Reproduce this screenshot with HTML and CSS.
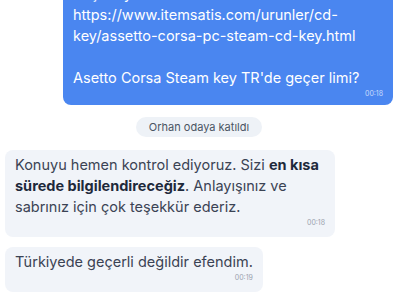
FILE: index.html
```html
<!DOCTYPE html>
<html>
<head>
    <meta charset="utf-8" />
    <title>Sohbet</title>
    <link rel="stylesheet" href="styles.css">
</head>
<body>
    <div class="chat">
        <div class="msg msg-out">
            <p class="msg-text">Merhaba, bu ürünü sitenizden satın almayı düşünüyorum:<br>https://www.itemsatis.com/urunler/cd-key/assetto-corsa-pc-steam-cd-key.html<br><br>Asetto Corsa Steam key TR'de geçer limi?</p>
            <span class="msg-time">00:18</span>
        </div>
        <div class="notice">Orhan odaya katıldı</div>
        <div class="msg msg-in">
            <p class="msg-text">Konuyu hemen kontrol ediyoruz. Sizi <b>en kısa</b> <b>sürede bilgilendireceğiz</b>. Anlayışınız ve sabrınız için çok teşekkür ederiz.</p>
            <span class="msg-time">00:18</span>
        </div>
        <div class="msg msg-in">
            <p class="msg-text">Türkiyede geçerli değildir efendim.</p>
            <span class="msg-time">00:19</span>
        </div>
    </div>
</body>
</html>
```
FILE: styles.css
```css
body {
    margin: 0;
    background: #fff;
    font-family: Inter, "Noto Sans", sans-serif;
}
.chat {
    height: 306px;
    box-sizing: border-box;
    padding: 0 6px 14px 5px;
    display: flex;
    flex-direction: column;
    justify-content: flex-end;
    overflow: hidden;
}
.msg {
    max-width: 330px;
    box-sizing: border-box;
    padding: 4px 10px 8px 10px;
    border-radius: 8px;
    flex-shrink: 0;
}
.msg-text {
    margin: 0;
    font-size: 14.5px;
    line-height: 21px;
}
.msg-text b {
    font-weight: 700;
    color: #1e293b;
}
.msg-time {
    display: block;
    text-align: right;
    font-size: 7px;
    line-height: 12px;
}
.msg-out {
    align-self: flex-end;
    background: #4a86f0;
    color: #fff;
    padding-bottom: 5px;
}
    .msg-out .msg-time {
        color: #c9dbfc;
    }
.msg-in {
    align-self: flex-start;
    background: #f1f4f9;
    color: #3b4354;
    margin-top: 10px;
}
    .msg-in .msg-time {
        color: #9ca3af;
    }
.notice {
    align-self: center;
    flex-shrink: 0;
    margin: 12px 0 3px;
    height: 20px;
    line-height: 20px;
    padding: 0 13px;
    border-radius: 10px;
    background: #eef2f7;
    color: #4b5563;
    font-size: 11px;
}
```
